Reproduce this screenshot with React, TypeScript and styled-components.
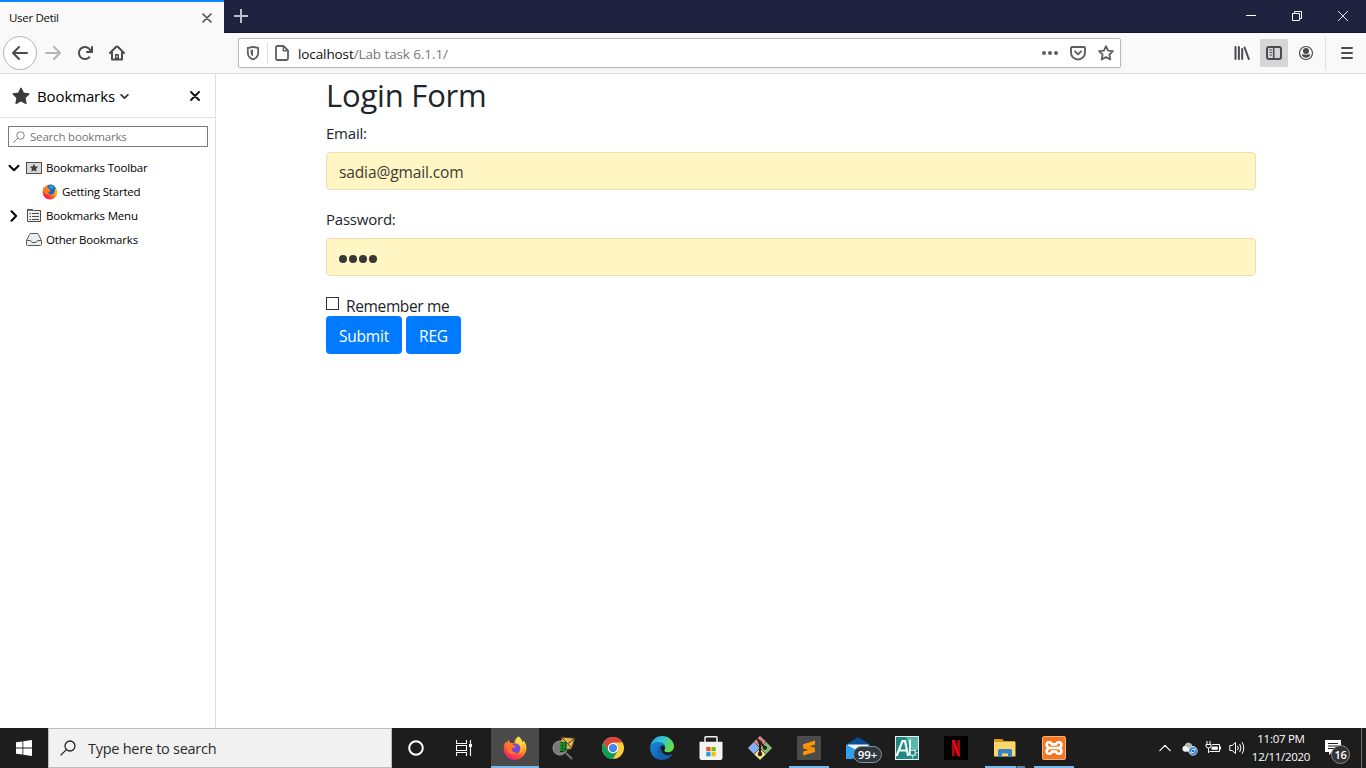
import React from "react";
import styled, { createGlobalStyle } from "styled-components";

const GlobalStyle = createGlobalStyle`
  * { box-sizing: border-box; }
  body {
    margin: 0;
    overflow: hidden;
    font-family: "Open Sans", "Noto Sans", sans-serif;
    color: #212529;
  }
  svg { display: block; flex: none; }
`;

const Screen = styled.div`
  width: 1366px;
  height: 768px;
  display: flex;
  flex-direction: column;
  background: #fff;
`;

/* ---------- Title bar ---------- */

const TabStrip = styled.div`
  height: 33px;
  flex: none;
  display: flex;
  background: #202340;
  box-shadow: inset 0 -1px 0 #15172b;
`;

const Tab = styled.div`
  width: 224px;
  padding: 0 12px 0 9px;
  border-top: 2px solid #0a84ff;
  background: #f9f9fa;
  display: flex;
  align-items: center;
  justify-content: space-between;
`;

const TabTitle = styled.span`
  font-size: 11.5px;
  line-height: 16px;
  letter-spacing: -0.3px;
  color: #0c0c0d;
`;

const NewTab = styled.div`
  padding: 9px 0 0 10px;
`;

const WindowControls = styled.div`
  margin-left: auto;
  display: flex;
`;

const WindowButton = styled.div`
  width: 46px;
  height: 32px;
  display: flex;
  align-items: center;
  justify-content: center;
`;

/* ---------- Navigation bar ---------- */

const NavBar = styled.div`
  height: 41px;
  flex: none;
  display: flex;
  align-items: center;
  padding: 0 3px 0 3px;
  background: #f9f9fa;
  border-bottom: 1px solid #e0e0e1;
`;

const BackButton = styled.div`
  width: 34px;
  height: 34px;
  border: 1px solid #b5b5b6;
  border-radius: 50%;
  background: #fff;
  display: flex;
  align-items: center;
  justify-content: center;
`;

const NavButton = styled.div<{ $active?: boolean }>`
  width: 28px;
  height: 28px;
  margin: 0 2px;
  border-radius: 2px;
  background: ${(p) => (p.$active ? "#d6d6d7" : "transparent")};
  display: flex;
  align-items: center;
  justify-content: center;
`;

const UrlBar = styled.div`
  width: 883px;
  height: 30px;
  margin-left: 105px;
  padding: 0 6px 0 7px;
  display: flex;
  align-items: center;
  border: 1px solid #b9b9ba;
  border-radius: 2px;
  background: #fff;
  box-shadow: 0 1px 4px rgba(0, 0, 0, 0.05);
`;

const NavGroup = styled.div`
  display: flex;
  align-items: center;
`;

const LeftButtons = styled(NavGroup)`
  width: 130px;
`;

const RightButtons = styled(NavGroup)`
  margin-left: auto;
`;

const UrlDivider = styled.span`
  width: 1px;
  height: 22px;
  margin: 0 6px 0 7px;
  background: #e1e1e2;
`;

const UrlText = styled.span`
  margin-left: 8px;
  padding-top: 1px;
  flex: 1;
  font-size: 13.5px;
  letter-spacing: -0.1px;
  color: #777778;
  b { font-weight: 400; color: #0c0c0d; }
`;

const UrlActions = styled.div`
  display: flex;
  gap: 12px;
`;

const ToolDivider = styled.span`
  width: 1px;
  height: 34px;
  margin: 0 5px 0 3px;
  background: #e0e0e1;
`;

/* ---------- Sidebar ---------- */

const Body = styled.div`
  flex: 1;
  min-height: 0;
  display: flex;
`;

const Sidebar = styled.aside`
  width: 216px;
  flex: none;
  border-right: 1px solid #e0e0e1;
  font-size: 11.5px;
  letter-spacing: -0.19px;
  color: #000;
`;

const SidebarHeader = styled.div`
  height: 44px;
  padding: 1px 15px 0 12px;
  display: flex;
  align-items: center;
  border-bottom: 1px solid #e0e0e1;
`;

const SidebarTitle = styled.span`
  margin: 0 5px 0 7px;
  font-size: 15px;
  letter-spacing: -0.12px;
`;

const HeaderClose = styled.div`
  margin-left: auto;
`;

const SearchBox = styled.div`
  height: 21px;
  margin: 8px 7px 9px 8px;
  padding: 0 4px;
  display: flex;
  align-items: center;
  gap: 5px;
  border: 1px solid #7a7a7a;
  color: #757575;
`;

const TreeRow = styled.div<{ $depth?: number }>`
  height: 24px;
  padding-left: ${(p) => 8 + (p.$depth || 0) * 16}px;
  display: flex;
  align-items: center;
`;

const Twisty = styled.span`
  width: 18px;
`;

const TreeLabel = styled.span`
  margin-left: 4px;
  line-height: 16px;
`;

/* ---------- Page ---------- */

const Page = styled.main`
  flex: 1;
  padding: 0 110px;
  font-size: 16px;
  line-height: 24px;
`;

const Heading = styled.h2`
  margin: 0 0 8px;
  padding-top: 2px;
  height: 38.4px;
  font-size: 31px;
  line-height: 38.4px;
  font-weight: 400;
  letter-spacing: -0.2px;
`;

const Field = styled.div`
  margin-bottom: 16px;
`;

const Label = styled.label`
  display: block;
  margin-bottom: 8px;
  padding-top: 1px;
  height: 24px;
  font-size: 15px;
  letter-spacing: -0.22px;
`;

const Input = styled.div`
  height: 38px;
  padding: 2px 12px 0;
  display: flex;
  align-items: center;
  border: 1px solid #ecdcb2;
  border-radius: 4px;
  background: #fff6c4;
  color: #3c3b35;
  font-size: 15.5px;
  letter-spacing: -0.12px;
`;

const Dots = styled.span`
  display: flex;
  gap: 2px;
  padding-top: 2px;
`;

const Dot = styled.i`
  width: 8px;
  height: 8px;
  border-radius: 50%;
  background: #373735;
`;

const CheckRow = styled.label`
  height: 24px;
  display: flex;
  align-items: center;
  font-size: 15.5px;
  letter-spacing: -0.36px;
  padding-top: 3px;
`;

const CheckBox = styled.span`
  width: 13px;
  height: 13px;
  margin: -4px 7px 0 0;
  border: 1px solid #333;
  background: #fff;
`;

const ButtonRow = styled.div`
  display: flex;
  gap: 4px;
`;

const Button = styled.button<{ $width: number }>`
  width: ${(p) => p.$width}px;
  height: 38px;
  padding: 1px 0 0;
  border: 0;
  border-radius: 4px;
  background: #007bff;
  color: #fff;
  font: 400 15.5px "Open Sans", sans-serif;
  letter-spacing: -0.2px;
`;

/* ---------- Taskbar ---------- */

const Taskbar = styled.footer`
  height: 40px;
  flex: none;
  display: flex;
  background: #1d1d1d;
  color: #fff;
`;

const TaskCell = styled.div<{ $active?: boolean; $gap?: number }>`
  position: relative;
  width: 48px;
  height: 40px;
  flex: none;
  margin-left: ${(p) => p.$gap || 0}px;
  background: ${(p) => (p.$active ? "#4a4a4a" : "transparent")};
  display: flex;
  align-items: center;
  justify-content: center;
`;

const Running = styled.span<{ $wide?: boolean; $split?: boolean }>`
  position: absolute;
  bottom: 0;
  left: ${(p) => (p.$wide ? 0 : 4)}px;
  right: ${(p) => (p.$wide ? 0 : 4)}px;
  height: 2px;
  background: ${(p) =>
    p.$split
      ? "linear-gradient(90deg, #76b9ed 31px, #34526a 31px, #34526a 32px, #5786ab 32px)"
      : "#76b9ed"};
`;

const TaskSearch = styled.div`
  width: 344px;
  padding: 0 12px 0 11px;
  display: flex;
  align-items: center;
  gap: 12px;
  background: #f1f1f1;
  border: 1px solid #bcbcbc;
  color: #2b2b2b;
  font-size: 14.5px;
  letter-spacing: -0.27px;
`;

const MailBadge = styled.span`
  position: absolute;
  left: 19px;
  top: 18px;
  width: 29px;
  height: 17px;
  border: 1px solid #8d9296;
  border-radius: 9px;
  background: #2d3840;
  font-size: 11.5px;
  font-weight: 600;
  line-height: 15px;
  text-align: center;
`;

const Tray = styled.div`
  margin-left: auto;
  display: flex;
  align-items: center;
`;

const TrayCell = styled.div`
  width: 24px;
  display: flex;
  justify-content: center;
`;

const Clock = styled.div`
  width: 64px;
  text-align: center;
  font-size: 11.5px;
  line-height: 18px;
  letter-spacing: -0.27px;
  white-space: nowrap;
`;

const Notifications = styled.div`
  position: relative;
  width: 48px;
  height: 40px;
  padding: 12px 0 0 12px;
`;

const Count = styled.span`
  position: absolute;
  left: 18px;
  top: 17px;
  width: 19px;
  height: 19px;
  border: 1px solid #8a8a8a;
  border-radius: 50%;
  background: #333;
  font-size: 11px;
  font-weight: 600;
  letter-spacing: -0.4px;
  line-height: 17px;
  text-align: center;
`;

const ShowDesktop = styled.div`
  width: 5px;
  height: 40px;
  border-left: 1px solid #6a6a6a;
`;

/* ---------- Icons ---------- */

const Svg = ({ w = 16, h = w, vb, children, ...rest }: any) => (
  <svg width={w} height={h} viewBox={vb || `0 0 ${w} ${h}`} fill="none" {...rest}>
    {children}
  </svg>
);

const ink = "#4a4a4f";

const Arrow = ({ flip, color = ink }: { flip?: boolean; color?: string }) => (
  <Svg stroke={color} strokeWidth={2} strokeLinecap="round" strokeLinejoin="round">
    <path d={flip ? "M1 8H15M9 2L15 8L9 14" : "M15 8H1M7 2L1 8L7 14"} />
  </Svg>
);

const Reload = () => (
  <Svg>
    <path
      fill={ink}
      d="M15 1a1 1 0 0 0-1 1v2.418A6.995 6.995 0 1 0 8 15a6.954 6.954 0 0 0 4.95-2.05 1 1 0 0 0-1.414-1.414A5.019 5.019 0 1 1 12.549 6H10a1 1 0 0 0 0 2h5a1 1 0 0 0 1-1V2a1 1 0 0 0-1-1z"
    />
  </Svg>
);

const Home = () => (
  <Svg stroke={ink} strokeWidth={2} strokeLinecap="round" strokeLinejoin="round">
    <path d="M1 8L7.2 1.8Q8 1.1 8.8 1.8L15 8M3 7.5V14.6H13V7.5" />
    <path d="M6 14V9.6Q6 9 6.6 9H9.4Q10 9 10 9.6V14Z" fill={ink} stroke="none" />
    <path d="M8 11V12" stroke="#f9f9fa" strokeWidth={1.2} />
  </Svg>
);

const Cross = ({ s, w, c }: { s: number; w: number; c: string }) => (
  <Svg w={s} stroke={c} strokeWidth={w} strokeLinecap="round">
    <path d={`M1 1L${s - 1} ${s - 1}M${s - 1} 1L1 ${s - 1}`} />
  </Svg>
);

const Shield = () => (
  <Svg w={14} h={16}>
    <path d="M7 1.8L12.2 3V7.5C12.2 11 10 13.4 7 14.3C4 13.4 1.8 11 1.8 7.5V3Z" stroke="#5f5f63" strokeWidth={1.8} strokeLinejoin="round" />
    <path d="M7 4.5V11.3C5.4 10.5 4.6 9.2 4.6 7.4V5Z" fill="#5f5f63" />
  </Svg>
);

const PageIcon = () => (
  <Svg stroke="#5f5f63" strokeWidth={1.8} strokeLinejoin="round">
    <path d="M3.5 1H9.5L14 5.5V13.5Q14 15 12.5 15H3.5Q2 15 2 13.5V2.5Q2 1 3.5 1Z" />
    <path d="M9.3 1.3V5.7H13.7" strokeWidth={1.4} />
  </Svg>
);

const MoreDots = () => (
  <Svg fill="#5f5f63">
    <circle cx={2} cy={8} r={2} /><circle cx={8} cy={8} r={2} /><circle cx={14} cy={8} r={2} />
  </Svg>
);

const Pocket = () => (
  <Svg stroke="#5f5f63" strokeWidth={1.9} strokeLinecap="round" strokeLinejoin="round">
    <path d="M2 2H14Q15 2 15 3V7.5A7 7 0 0 1 1 7.5V3Q1 2 2 2Z" />
    <path d="M5 6.3L8 9.3L11 6.3" />
  </Svg>
);

const starPath = "M8 1.2L10.1 5.6L14.9 6.2L11.4 9.6L12.3 14.5L8 12.1L3.7 14.5L4.6 9.6L1.1 6.2L5.9 5.6Z";

const Star = ({ solid, size = 16 }: { solid?: boolean; size?: number }) => (
  <Svg w={size} vb="0 0 16 16">
    <path d={starPath} fill={solid ? "#3b3b3d" : "none"} stroke={solid ? "#3b3b3d" : "#5f5f63"} strokeWidth={solid ? 1.4 : 1.8} strokeLinejoin="round" />
  </Svg>
);

const Library = () => (
  <Svg stroke={ink} strokeLinecap="round">
    <path d="M1.5 2V14M4.9 2V14M8.2 4V14M10.6 2.5L14.8 14" strokeWidth={2} />
  </Svg>
);

const SidebarIcon = () => (
  <Svg stroke={ink}>
    <rect x={1} y={2} width={14} height={12} rx={2} strokeWidth={2} />
    <path d="M7.7 2V14" strokeWidth={1.6} />
    <path d="M3 5H6M3.5 7.5H6M3.5 10H6" strokeWidth={1} />
  </Svg>
);

const Account = () => (
  <Svg>
    <circle cx={8} cy={8} r={6.5} stroke={ink} strokeWidth={1.2} />
    <circle cx={8} cy={6} r={3} fill={ink} />
    <path d="M3.6 9.6Q5.5 9 6 9.2Q8 10.4 10 9.2Q10.5 9 12.4 9.6Q11.4 12.7 8 12.8Q4.6 12.7 3.6 9.6Z" fill={ink} />
  </Svg>
);

const Menu = () => (
  <Svg stroke={ink} strokeWidth={2} strokeLinecap="round">
    <path d="M3 3H13M3 8H13M3 13H13" />
  </Svg>
);

const Chevron = ({ dir = "down", w = 12, c = "#000", sw = 2 }: any) => (
  <Svg w={w} vb="0 0 12 12" stroke={c} strokeWidth={sw} strokeLinecap="round" strokeLinejoin="round">
    <path d={{ down: "M1.5 3.8L6 8.2L10.5 3.8", right: "M3.5 1.2L8.1 6L3.5 10.8", up: "M0.8 8.6L6 3.4L11.2 8.6" }[dir as "down"]} />
  </Svg>
);

const Magnifier = ({ size, c, sw }: { size: number; c: string; sw: number }) => (
  <Svg w={size} vb="0 0 16 16" stroke={c} strokeWidth={sw}>
    <circle cx={10} cy={6} r={5} /><path d="M6.4 9.6L0.6 15.4" />
  </Svg>
);

const ToolbarFolder = () => (
  <Svg>
    <rect x={0.5} y={2.5} width={15} height={11} fill="#d9d9da" stroke="#4b4b4b" />
    <path d="M8 3.7L9.3 6.4L12.2 6.8L10.1 8.8L10.6 11.7L8 10.3L5.4 11.7L5.9 8.8L3.8 6.8L6.7 6.4Z" fill="#3d3d3d" />
  </Svg>
);

const MenuFolder = () => (
  <Svg>
    <path d="M1.5 13.5V1.5H6.5L7.5 2.5H14.5V13.5Z" fill="#eee" stroke="#4b4b4b" />
    <path d="M1.5 2.2H7" stroke="#4b4b4b" />
    <path d="M3.5 5.5H5M3.5 8.5H5M3.5 11.5H5M6 5.5H13M6 8.5H13M6 11.5H13" stroke="#4b4b4b" />
  </Svg>
);

const Inbox = () => (
  <Svg stroke="#5a5a5a" strokeLinejoin="round">
    <path d="M0.5 8.5L3.5 2.5Q3.8 1.5 5 1.5H11Q12.2 1.5 12.5 2.5L15.5 8.5V12.5Q15.5 13.5 14.5 13.5H1.5Q0.5 13.5 0.5 12.5Z" fill="#ededed" />
    <path d="M0.7 8.5H4.5L6 10.5H10L11.5 8.5H15.3" fill="none" />
  </Svg>
);

const FirefoxClassic = () => (
  <Svg w={16}>
    <defs>
      <linearGradient id="foxClassic" x1="0.95" y1="0.1" x2="0.2" y2="0.9">
        <stop offset="0" stopColor="#ffe226" /><stop offset=".45" stopColor="#ff9a1c" />
        <stop offset=".75" stopColor="#ff4b2b" /><stop offset="1" stopColor="#e5156b" />
      </linearGradient>
    </defs>
    <circle cx={8} cy={8} r={7.4} fill="url(#foxClassic)" />
    <path d="M4.6 2.2Q7.5 -0.4 11.3 1.2Q13.2 2.4 13.6 4.6L12.4 8Q11.6 10.8 8.8 10.6Q6.2 10.2 6 8.2L7.8 7.6L8.6 6L6.6 5.2L6.2 3.6Z" fill="#1a66c8" />
    <path d="M7 1.6Q9.5 0.9 11.6 2.6L10.4 5.2L8.2 4.2Z" fill="#1fa6e6" />
    <path d="M1.2 3.2L3 4L5.6 2.2L5.8 4.2L8.2 5.6L6.4 6.8Q5.6 8.8 7 10.2L3 10Q0.6 7 1.2 3.2Z" fill="#ff7a1f" />
  </Svg>
);

const Firefox = () => (
  <Svg w={24}>
    <defs>
      <linearGradient id="fox" x1="0.8" y1="0.05" x2="0.25" y2="0.95">
        <stop offset="0" stopColor="#fff14a" /><stop offset=".4" stopColor="#ff9a25" />
        <stop offset=".7" stopColor="#ff5035" /><stop offset="1" stopColor="#f0207c" />
      </linearGradient>
    </defs>
    <path d="M15.5 0.5C18 2.3 19 4.5 19.3 6L20.8 4.8C23 7.5 23.7 10.5 23.3 13.5C22.6 19.5 17.8 23.7 12 23.7C5.5 23.7 0.7 18.7 0.7 12.5C0.7 9 1.7 7 3.2 5.2L3.7 7.2L5.7 4L7.2 7L11.5 7.5C11.2 5 12.7 2 15.5 0.5Z" fill="url(#fox)" />
    <circle cx={12.3} cy={12.6} r={5} fill="#7948d4" />
    <path d="M2.5 9Q6 6.5 9 8.3L13 10.2Q12 12 9.5 12Q8.2 13.5 9.6 15.5Q11 17 14 16.3Q10.5 20.5 6 17Q3 14 2.5 9Z" fill="#ff762c" />
    <path d="M12 7Q16.5 7.5 17.7 11Q18.5 15 15.5 18.2Q22 15.5 19.8 8L15.5 1Q12.8 3.5 12 7Z" fill="#ffbd32" />
    <path d="M15.5 0.5Q12.8 3.5 13 6.5Q17 7 18.6 10.5Q20 8 18.5 4.5Q17.5 1.8 15.5 0.5Z" fill="#ffe04a" />
  </Svg>
);

const Chrome = () => (
  <Svg w={22} vb="0 0 24 24">
    <circle cx={12} cy={12} r={12} fill="#ffcd40" />
    <path d="M1.6 6A12 12 0 0 1 22.4 6H12L6.8 9.2V15Z" fill="#db4437" />
    <path d="M1.6 6L6.8 15L12 18L17.2 15L12 24A12 12 0 0 1 1.6 6Z" fill="#0f9d58" />
    <circle cx={12} cy={12} r={5.6} fill="#fff" /><circle cx={12} cy={12} r={4.5} fill="#4285f4" />
  </Svg>
);

const Edge = () => (
  <Svg w={24}>
    <defs>
      <linearGradient id="edgeTop" x1="0" y1="0" x2="1" y2="0.4">
        <stop offset="0" stopColor="#229ddd" /><stop offset=".5" stopColor="#31c5d8" /><stop offset="1" stopColor="#65dc48" />
      </linearGradient>
      <linearGradient id="edgeLow" x1="0" y1="0" x2="1" y2="1">
        <stop offset="0" stopColor="#1688d6" /><stop offset="1" stopColor="#1252a3" />
      </linearGradient>
    </defs>
    <path d="M0.2 11C1 4.5 6 0 12 0C19 0 24 5 24 10.3C24 14 21.5 16.3 18 16.3C15 16.3 14 15.2 14.3 14.3C15.8 13 15.7 8.3 10 7C5.5 6.3 1.8 7.7 0.2 11Z" fill="url(#edgeTop)" />
    <path d="M0.1 12C0.4 8.5 4 6 8.3 6C13 6 15.6 9 15.4 11.5C14.8 9.7 13 9.2 11.6 9.8C8.6 11.3 8 14 9.2 17C10.7 20 14.5 21.7 19.5 19.6L22.3 18.3C20.3 22 16.7 24 12 24C5 24 0 18.5 0.1 12Z" fill="url(#edgeLow)" />
    <path d="M11.5 9.8C7 12 6.5 19 12.5 21.7C16 23 20 21.4 22.3 18.3C19 20 15 19.5 12.8 17C10.5 14.5 10.3 11.5 11.5 9.8Z" fill="#1760b0" />
  </Svg>
);

const Store = () => (
  <Svg w={24}>
    <path d="M6 7V1.5Q6 0.8 6.7 0.8H17.3Q18 0.8 18 1.5V7" stroke="#eee" strokeWidth={1.5} />
    <path d="M0.5 5.8H23.5V21.8Q23.5 24 21.3 24H2.7Q0.5 24 0.5 21.8Z" fill="#f4f4f4" />
    <path d="M7.3 11H11.5V15.2H7.3Z" fill="#f25022" /><path d="M12.5 11H16.7V15.2H12.5Z" fill="#7fba00" />
    <path d="M7.3 16.1H11.5V20.3H7.3Z" fill="#00a4ef" /><path d="M12.5 16.1H16.7V20.3H12.5Z" fill="#ffb900" />
  </Svg>
);

const Git = () => (
  <Svg w={24}>
    <g stroke="#f4efe9" strokeWidth={0.5}>
      <path d="M12 0.4L17.6 5.7L12 11L6.4 5.7Z" fill="#f0787c" />
      <path d="M5.9 6.4L11.3 12L5.9 17.6L0.4 12Z" fill="#80b3ff" />
      <path d="M18.1 6.4L23.6 12L18.1 17.6L12.7 12Z" fill="#79c46c" />
      <path d="M12 13L17.6 18.3L12 23.6L6.4 18.3Z" fill="#ffe680" />
    </g>
    <path d="M12 6V18M9 2.8L12 6L17.3 11.8" stroke="#2b201b" strokeWidth={2} />
    <circle cx={12} cy={6.6} r={2} fill="#2b201b" /><circle cx={12} cy={18} r={2.2} fill="#2b201b" /><circle cx={17} cy={11.8} r={2.1} fill="#2b201b" />
  </Svg>
);

const Sublime = () => (
  <Svg w={24}>
    <rect width={24} height={24} rx={1.5} fill="#4b4b4b" />
    <path d="M6.2 8.2L18 4.5V8.6L12.5 10.3L18 11.9V16L6.2 19.6V15.6L11.6 13.9L6.2 12.2Z" fill="#ff9800" />
    <path d="M6.2 12.2V8.2L18 11.9V16Z" fill="#f58b06" />
  </Svg>
);

const Mail = () => (
  <Svg w={24}>
    <path d="M0 8.5L12 1L24 8.5V23H0Z" fill="#0a4d95" />
    <path d="M1.5 8.5H22.5V17H1.5Z" fill="#f3f7fb" />
    <path d="M0 8.8L12 15L24 8.8V23H0Z" fill="#1583d5" /><path d="M0 8.8L13.5 15.8L5 23H0Z" fill="#2ea3ec" />
  </Svg>
);

const MailSearch = () => (
  <Svg w={24}>
    <path d="M9.5 1L23 2.2L19.5 13L8 14Z" fill="#e0b65c" stroke="#4c350e" />
    <path d="M9.5 1L15.5 7.8L23 2.2M15.5 7.8L20 12" stroke="#4c350e" />
    <circle cx={8} cy={12} r={7} fill="#777978" stroke="#9b9d9d" />
    <path d="M8 6H14.5V14L11 16H8Z" fill="#073d0a" />
    <path d="M9 6V15M12 6V14M8 8H14M8 11H15M8 14H13" stroke="#24b22e" />
    <path d="M14 17L20 23" stroke="#707472" strokeWidth={2} />
  </Svg>
);

const ArtIcon = () => (
  <Svg w={24}>
    <rect x={0.5} y={0.5} width={23} height={23} fill="#23877f" stroke="#e2f5f0" />
    <path d="M11 1H23V14H20L15 12Z" fill="#58b8aa" />
    <path d="M1.5 20L7.5 5H10L13.2 20M4.5 14.5H11.5" stroke="#f3fffc" strokeWidth={2.2} />
    <path d="M15 3.5V19" stroke="#f3fffc" strokeWidth={1.8} />
    <rect x={15.2} y={14.2} width={5} height={5} stroke="#fff" fill="#23877f" />
    <path d="M20 16.7H23M17.7 19V22.5" stroke="#bcebe0" />
  </Svg>
);

const Netflix = () => (
  <Svg w={24}>
    <rect width={24} height={24} fill="#000" />
    <path d="M8 4H10.8V20L8 20.4ZM13.2 4H16V20.4L13.2 20Z" fill="#b20710" />
    <path d="M8 4H10.8L16 20.4L13.2 20Z" fill="#e50914" />
  </Svg>
);

const Explorer = () => (
  <Svg w={24}>
    <path d="M1 3H9L11 5H22V9H1Z" fill="#d99a1b" /><path d="M1 6H22.5V20.5H1Z" fill="#ffd66b" />
    <path d="M5 21V14.5Q5 13 6.5 13H17.5Q19 13 19 14.5V21H15V17.5H9V21Z" fill="#3486cb" />
  </Svg>
);

const Xampp = () => (
  <Svg w={24}>
    <rect width={24} height={24} rx={2.5} fill="#f37623" /><rect x={0.5} y={0.5} width={23} height={23} rx={2} stroke="#f9ae7d" />
    <path
      d="M8.2 12H15.8M8.2 12Q4.6 11.4 4.6 8.8Q4.6 6.2 7.2 6.2Q9.4 6.2 9.8 8.4H14.2Q14.6 6.2 16.8 6.2Q19.4 6.2 19.4 8.8Q19.4 11.4 16.4 12Q19.4 12.6 19.4 15.2Q19.4 17.8 16.8 17.8Q14.8 17.8 14.2 15.6H9.8Q9.2 17.8 7.2 17.8Q4.6 17.8 4.6 15.2Q4.6 12.6 8.2 12Z"
      stroke="#fff" strokeWidth={2.6} strokeLinejoin="round"
    />
    <path d="M10 4.5L12 6.8L14 4.5M10 19.5L12 17.2L14 19.5" fill="#f37623" />
  </Svg>
);

const Windows = () => (
  <Svg w={16} fill="#fff">
    <path d="M0 2.3L6.5 1.4V7.6H0ZM7.3 1.3L16 0V7.6H7.3ZM0 8.4H6.5V14.6L0 13.7ZM7.3 8.4H16V16L7.3 14.7Z" />
  </Svg>
);

const TaskView = () => (
  <Svg w={16} stroke="#fff">
    <path d="M0.5 0V3.5H10.5V0M0.5 16V12.5H10.5V16M0.5 5.5V10.5H10.5V5.5ZM14.5 0V16" strokeWidth={1.1} />
    <path d="M13 4H16V7H13Z" fill="#fff" stroke="none" />
  </Svg>
);

const OneDrive = () => (
  <Svg w={17} h={16}>
    <path d="M3.5 11.5A3.5 3.5 0 0 1 3.6 5.5Q5.2 1.5 9 3Q10.8 3.5 11.5 6Q15.5 6 15.5 9.5V11.5Z" fill="#b7b7b7" />
    <path d="M3.5 11.5A3 3 0 0 1 3 6Q7 6 11 11.5Z" fill="#f5f5f5" />
    <circle cx={12} cy={11} r={4.2} fill="#1670c4" stroke="#fff" strokeWidth={0.8} />
    <path d="M9.8 10.5Q12 7.5 14 10.3V8.5M14.2 11.5Q12 14.5 10 11.7V13.5" stroke="#fff" />
  </Svg>
);

const Battery = () => (
  <Svg stroke="#fff">
    <path d="M2 1V4M5 1V4M1 4.5H6V6Q6 8 3.5 8Q1 8 1 6ZM3.5 8V13" />
    <path d="M7 4.5H14.5V11.5H4.5M15.5 6.5V9.5" /><path d="M6.5 6.5H12.8V9.8H6.5Z" fill="#fff" stroke="none" />
  </Svg>
);

const Speaker = () => (
  <Svg w={17} h={16} stroke="#fff">
    <path d="M0.8 5.5H3.2L6.5 2.5V13.5L3.2 10.5H0.8Z" />
    <path d="M8.5 5.8Q10 8 8.5 10.2M10.7 4Q13.2 8 10.7 12M13 2.2Q16.5 8 13 13.8" />
  </Svg>
);

export default function App() {
  return (
    <Screen>
      <GlobalStyle />
      <TabStrip>
        <Tab>
          <TabTitle>User Detil</TabTitle>
          <Cross s={10} w={1.6} c="#4a4a4f" />
        </Tab>
        <NewTab>
          <Svg w={14} stroke="#bcbdc9" strokeWidth={2}><path d="M7 0V14M0 7H14" /></Svg>
        </NewTab>
        <WindowControls>
          <WindowButton><Svg w={10} stroke="#fff"><path d="M0 4.5H10" /></Svg></WindowButton>
          <WindowButton><Svg w={10} stroke="#fff"><path d="M0.5 2.5H7.5V9.5H0.5ZM2.5 2.5V0.5H9.5V7.5H7.5" /></Svg></WindowButton>
          <WindowButton><Svg w={10} stroke="#fff" strokeWidth={0.9}><path d="M0 0L10 10M10 0L0 10" /></Svg></WindowButton>
        </WindowControls>
      </TabStrip>

      <NavBar>
        <LeftButtons>
          <BackButton><Arrow /></BackButton>
          <NavButton><Arrow flip color="#b4b4b6" /></NavButton>
          <NavButton><Reload /></NavButton>
          <NavButton><Home /></NavButton>
        </LeftButtons>
        <UrlBar>
          <Shield />
          <UrlDivider />
          <PageIcon />
          <UrlText><b>localhost</b>/Lab task 6.1.1/</UrlText>
          <UrlActions><MoreDots /><Pocket /><Star /></UrlActions>
        </UrlBar>
        <RightButtons>
          <NavButton><Library /></NavButton>
          <NavButton $active><SidebarIcon /></NavButton>
          <NavButton><Account /></NavButton>
          <ToolDivider />
          <NavButton><Menu /></NavButton>
        </RightButtons>
      </NavBar>

      <Body>
        <Sidebar>
          <SidebarHeader>
            <Star solid size={18} />
            <SidebarTitle>Bookmarks</SidebarTitle>
            <Chevron w={9} c="#333" sw={2.4} />
            <HeaderClose><Cross s={10} w={1.9} c="#111" /></HeaderClose>
          </SidebarHeader>
          <SearchBox><Magnifier size={12} c="#7c7c7c" sw={1.3} />Search bookmarks</SearchBox>
          <TreeRow><Twisty><Chevron /></Twisty><ToolbarFolder /><TreeLabel>Bookmarks Toolbar</TreeLabel></TreeRow>
          <TreeRow $depth={1}><Twisty /><FirefoxClassic /><TreeLabel>Getting Started</TreeLabel></TreeRow>
          <TreeRow><Twisty><Chevron dir="right" /></Twisty><MenuFolder /><TreeLabel>Bookmarks Menu</TreeLabel></TreeRow>
          <TreeRow><Twisty /><Inbox /><TreeLabel>Other Bookmarks</TreeLabel></TreeRow>
        </Sidebar>

        <Page>
          <Heading>Login Form</Heading>
          <Field><Label>Email:</Label><Input>sadia@gmail.com</Input></Field>
          <Field><Label>Password:</Label><Input><Dots><Dot /><Dot /><Dot /><Dot /></Dots></Input></Field>
          <CheckRow><CheckBox />Remember me</CheckRow>
          <ButtonRow><Button $width={76}>Submit</Button><Button $width={55}>REG</Button></ButtonRow>
        </Page>
      </Body>

      <Taskbar>
        <TaskCell><Windows /></TaskCell>
        <TaskSearch><Magnifier size={16} c="#222" sw={1.3} />Type here to search</TaskSearch>
        <TaskCell><Svg w={16}><circle cx={8} cy={8} r={6.8} stroke="#fff" strokeWidth={2} /></Svg></TaskCell>
        <TaskCell><TaskView /></TaskCell>
        <TaskCell $active $gap={3}><Firefox /><Running $wide /></TaskCell>
        <TaskCell $gap={1}><MailSearch /></TaskCell>
        <TaskCell $gap={1}><Chrome /></TaskCell>
        <TaskCell $gap={1}><Edge /></TaskCell>
        <TaskCell $gap={1}><Store /></TaskCell>
        <TaskCell $gap={1}><Git /></TaskCell>
        <TaskCell $gap={1}><Sublime /><Running /></TaskCell>
        <TaskCell $gap={1}><Mail /><MailBadge>99+</MailBadge></TaskCell>
        <TaskCell $gap={1}><ArtIcon /></TaskCell>
        <TaskCell $gap={1}><Netflix /></TaskCell>
        <TaskCell $gap={1}><Explorer /><Running $split /></TaskCell>
        <TaskCell $gap={1}><Xampp /><Running /></TaskCell>
        <Tray>
          <TrayCell><Chevron dir="up" c="#fff" sw={1.2} /></TrayCell>
          <TrayCell><OneDrive /></TrayCell>
          <TrayCell><Battery /></TrayCell>
          <TrayCell><Speaker /></TrayCell>
          <Clock>11:07 PM<br />12/11/2020</Clock>
          <Notifications>
            <Svg w={16} fill="#fff"><path d="M0 0H16V12H7L4 15V12H0Z" /><path d="M3 3.5H13M3 6H13M3 8.5H9" stroke="#1d1d1d" /></Svg>
            <Count>16</Count>
          </Notifications>
          <ShowDesktop />
        </Tray>
      </Taskbar>
    </Screen>
  );
}
